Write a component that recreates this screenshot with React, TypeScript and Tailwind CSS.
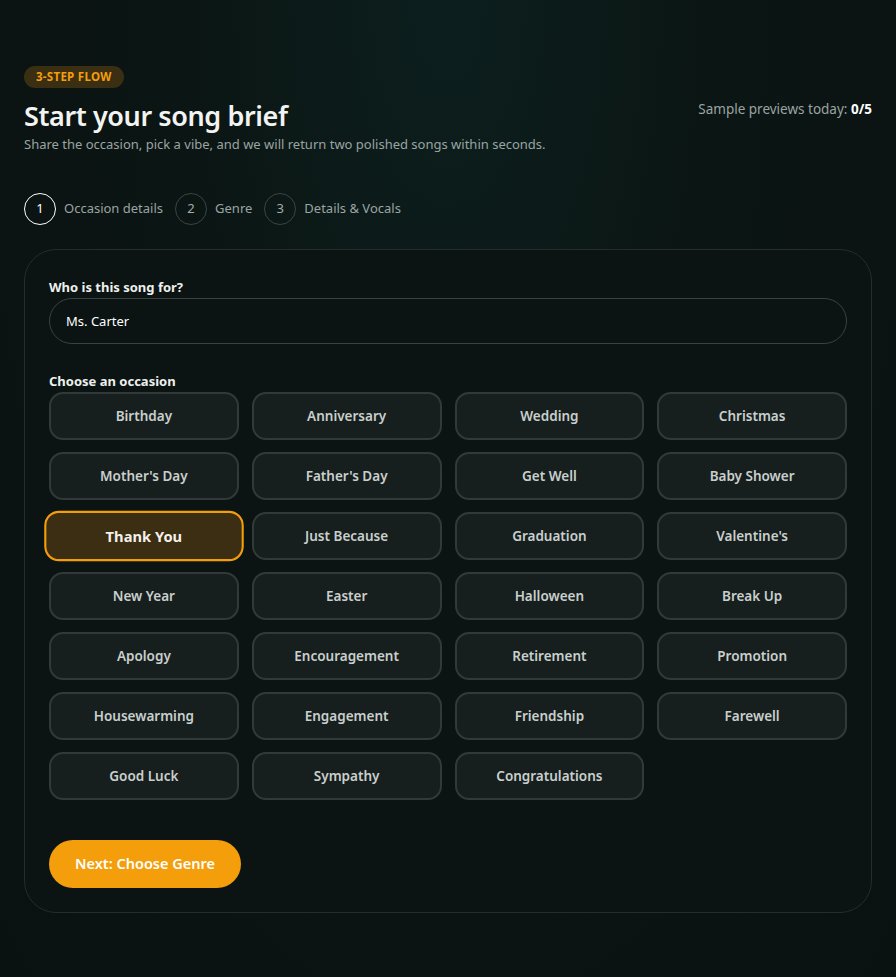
import React, { useState } from "react";

const OCCASIONS = [
  "Birthday",
  "Anniversary",
  "Wedding",
  "Christmas",
  "Mother's Day",
  "Father's Day",
  "Get Well",
  "Baby Shower",
  "Thank You",
  "Just Because",
  "Graduation",
  "Valentine's",
  "New Year",
  "Easter",
  "Halloween",
  "Break Up",
  "Apology",
  "Encouragement",
  "Retirement",
  "Promotion",
  "Housewarming",
  "Engagement",
  "Friendship",
  "Farewell",
  "Good Luck",
  "Sympathy",
  "Congratulations",
];

const STEPS = [
  { n: 1, label: "Occasion details" },
  { n: 2, label: "Genre" },
  { n: 3, label: "Details & Vocals" },
];

export default function App() {
  const [selected, setSelected] = useState("Thank You");
  const [name, setName] = useState("Ms. Carter");

  return (
    <div
      className="min-h-[977px] w-full bg-[#0b1412] bg-[radial-gradient(ellipse_at_50%_0%,#0c1f1e_0%,#0b1513_45%,#0a1211_100%)] text-white"
      style={{ fontFamily: '"Noto Sans", "Open Sans", sans-serif' }}
    >
      <div className="px-6 pt-[66px] pb-16">
        <div className="flex items-center justify-between">
          <div className="flex flex-col items-start">
            <span className="rounded-full bg-[#3a2f12] px-3 py-[3px] text-[11.5px] font-bold leading-4 tracking-wide text-[#f59e0b]">
              3-STEP FLOW
            </span>
            <h1 className="mt-[10px] text-[27px] font-semibold leading-9 tracking-[-0.4px] text-[#f3f4f2]">
              Start your song brief
            </h1>
            <p className="mt-[2px] text-[13px] leading-4 text-[#9aa4a2]">
              Share the occasion, pick a vibe, and we will return two polished songs within seconds.
            </p>
          </div>
          <div className="text-[13.5px] text-[#9aa4a2]">
            Sample previews today: <span className="font-bold text-white">0/5</span>
          </div>
        </div>

        <div className="mt-[41px] flex items-center gap-3">
          {STEPS.map((s) => (
            <div key={s.n} className="flex items-center gap-2">
              <span
                className={
                  s.n === 1
                    ? "flex h-8 w-8 items-center justify-center rounded-full border-[1.5px] border-white text-[13px] text-white"
                    : "flex h-8 w-8 items-center justify-center rounded-full border border-[#3a4442] text-[13px] text-[#a3adab]"
                }
              >
                {s.n}
              </span>
              <span className="text-[13px] text-[#9aa4a2]">{s.label}</span>
            </div>
          ))}
        </div>

        <div className="mt-6 rounded-[32px] border border-[#252d2c] bg-[#0b1413] px-6 pt-[29px] pb-6">
          <label className="block text-[13px] font-bold leading-4 text-[#eef0ee]">
            Who is this song for?
          </label>
          <input
            value={name}
            onChange={(e) => setName(e.target.value)}
            className="mt-[3px] h-[46px] w-full rounded-full border border-[#3a4342] bg-transparent px-4 text-[13px] text-white outline-none"
          />

          <div className="mt-[29px] text-[13px] font-bold leading-4 text-[#eef0ee]">
            Choose an occasion
          </div>
          <div className="mt-[3px] grid grid-cols-4 gap-x-[13px] gap-y-3">
            {OCCASIONS.map((o) => {
              const active = o === selected;
              return (
                <button
                  key={o}
                  onClick={() => setSelected(o)}
                  className={
                    active
                      ? "h-12 scale-[1.05] rounded-[14px] border-2 border-[#f59e0b] bg-[#3b2e12] text-[14px] font-bold text-[#f3f1ea]"
                      : "h-12 rounded-[14px] border-2 border-[#323a39] bg-[#171f1e] text-[13.5px] font-semibold text-[#c9cfcd]"
                  }
                >
                  {o}
                </button>
              );
            })}
          </div>

          <button className="mt-[40px] h-12 w-[192px] rounded-full bg-[#f59e0b] text-[14.5px] font-semibold text-white">
            Next: Choose Genre
          </button>
        </div>
      </div>
    </div>
  );
}
